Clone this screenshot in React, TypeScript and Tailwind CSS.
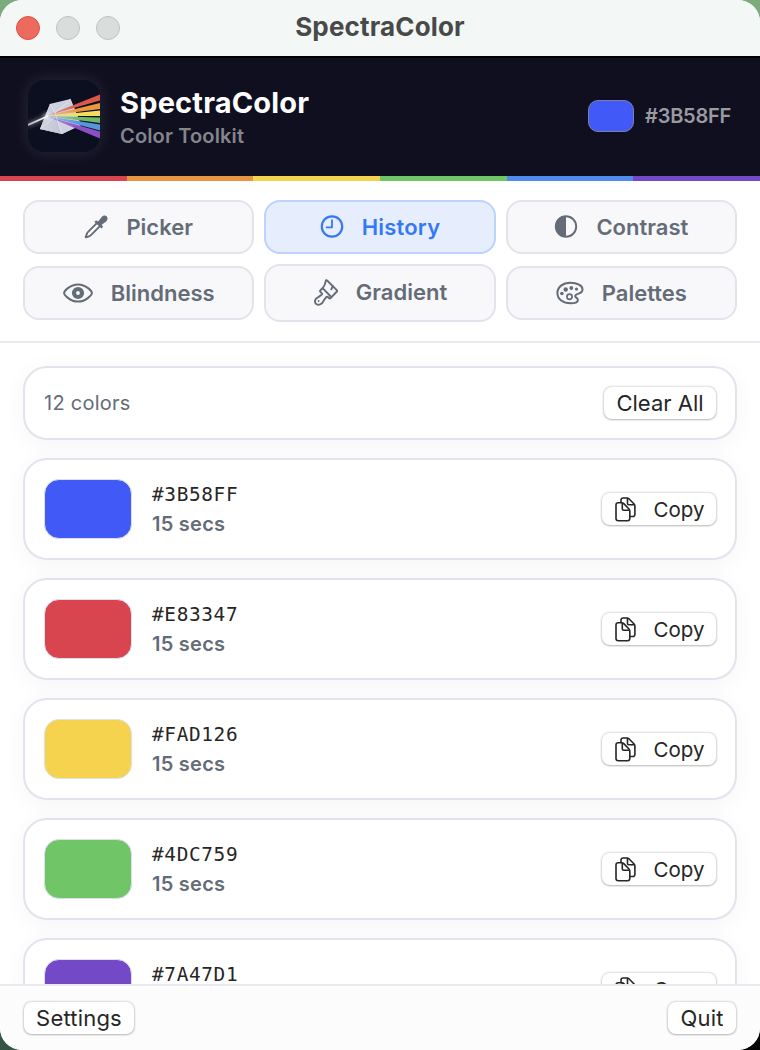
import type { ReactNode } from 'react';
import clsx from 'clsx';

const stripes = ['bg-[#d8454f]', 'bg-[#e8953f]', 'bg-[#f5d34f]', 'bg-[#70c567]', 'bg-[#508bee]', 'bg-[#7449c8]'];

const history = [
  { hex: '#3B58FF', swatch: 'bg-[#4059f7]', time: '15 secs' },
  { hex: '#E83347', swatch: 'bg-[#d8454f]', time: '15 secs' },
  { hex: '#FAD126', swatch: 'bg-[#f5d34f]', time: '15 secs' },
  { hex: '#4DC759', swatch: 'bg-[#70c567]', time: '15 secs' },
  { hex: '#7A47D1', swatch: 'bg-[#7449c8]', time: '15 secs' },
];

const PickerIcon = () => (
  <svg width="24" height="24" viewBox="0 0 24 24" fill="none">
    <path
      d="M13.6 7.4 4.1 16.9c-.9.9-1.1 1.4-1.3 2.3L1.6 22l.5.4 2.8-1.1c.9-.3 1.5-.6 2.3-1.4l9.5-9.5"
      stroke="currentColor"
      strokeWidth="1.9"
      strokeLinejoin="round"
    />
    <path
      d="M10.9 6.2c.8-.9 1.7-.9 2.5-.2l.7.5 3.2-4.1c1.5-2 3.8-2.5 5.3-1.1s1.2 3.9-.8 5.4l-4.1 3.1.6.8c.6.8.6 1.6-.1 2.3l-.7.7-7-6.7z"
      fill="currentColor"
    />
  </svg>
);

const ClockIcon = () => (
  <svg width="24" height="24" viewBox="0 0 24 24" fill="none" stroke="currentColor" strokeWidth="2.2" strokeLinecap="round">
    <circle cx="12" cy="11.5" r="10.2" />
    <path d="M12 5.2v7.1H6.6" strokeWidth="1.8" strokeLinejoin="round" />
  </svg>
);

const ContrastIcon = () => (
  <svg width="24" height="24" viewBox="0 0 24 24" fill="none">
    <circle cx="12" cy="11.5" r="10.2" stroke="currentColor" strokeWidth="1.9" />
    <path d="M12 1.3a10.2 10.2 0 0 0 0 20.4z" fill="currentColor" />
  </svg>
);

const EyeIcon = () => (
  <svg width="30" height="20" viewBox="0 0 30 20" fill="none">
    <path
      d="M1.1 10c0-1.5 5.5-8.6 13.9-8.6S28.9 8.5 28.9 10 23.4 18.6 15 18.6 1.1 11.5 1.1 10z"
      stroke="currentColor"
      strokeWidth="2"
    />
    <circle cx="15" cy="10" r="4" stroke="currentColor" strokeWidth="4.2" />
  </svg>
);

const BrushIcon = () => (
  <svg
    width="24"
    height="27"
    viewBox="0 0 24 27"
    fill="none"
    stroke="currentColor"
    strokeWidth="1.9"
    strokeLinecap="round"
    strokeLinejoin="round"
  >
    <path d="M13.1 1.5 22.8 11.2c.5.5.5.9.1 1.3L16.6 19.2c-.5.5-1 .5-1.4 0l-1.3-1.2c-.6-.5-1.1-.5-1.6.1l-1.4 1.7c-.5.6-.8 1.1-1.3 2C8.2 24.9 5 26.7 2.5 25.2-.1 23.3.8 19.5 3.9 18.3c.9-.4 1.4-.7 2-1.2l1.7-1.4c.6-.5.6-1.1.1-1.6l-1.3-1.3c-.5-.5-.5-1 0-1.5l2.2-2.1c1.8-2 2.7-4 3.1-7.1.1-.9.8-1.2 1.4-.6z" />
    <path d="m8.6 9.2 8.7 8.8M17.3 10.3l1.5-3.1" />
    <circle cx="4.6" cy="22" r=".9" fill="currentColor" stroke="none" />
  </svg>
);

const PaletteIcon = () => (
  <svg width="28" height="24" viewBox="0 0 28 24" fill="none">
    <path
      d="M14.2 1.7C21.5 1.7 26.3 4.4 26.5 8.1c.2 2.5-1.6 3.8-3.9 4.5-2.1.6-3.5 1.4-3.4 2.7.1 1.2 2.7 1.6 2.7 3.6 0 2.2-3.3 3.4-7.3 3.4C7 22.3 1.4 18.2 1.4 12.1c0-6 5.5-10.4 12.8-10.4z"
      stroke="currentColor"
      strokeWidth="2"
    />
    <circle cx="5.9" cy="12.5" r="1.8" fill="currentColor" />
    <circle cx="9.7" cy="8.5" r="2.2" fill="currentColor" />
    <circle cx="15.3" cy="7" r="1.9" fill="currentColor" />
    <circle cx="20.5" cy="8.1" r="1.6" fill="currentColor" />
    <circle cx="13.5" cy="15.8" r="2.6" stroke="currentColor" strokeWidth="1.7" />
  </svg>
);

const CopyIcon = () => (
  <svg
    className="-mt-px"
    width="21"
    height="25"
    viewBox="0 0 21 25"
    fill="none"
    stroke="currentColor"
    strokeWidth="1.6"
    strokeLinecap="round"
    strokeLinejoin="round"
  >
    <path d="M6 5V3.2C6 1.8 6.8 1 8.2 1H12c.8 0 1.3.2 1.9.8l5.2 5.2c.6.6.8 1.1.8 2v8.2c0 1.5-.8 2.3-2.3 2.3h-2.2" />
    <path d="M12.5 1.5v5c0 .9.5 1.3 1.3 1.3h5.5" />
    <path d="M1 8C1 6.5 1.8 5.8 3.2 5.8h3.6c.9 0 1.4.2 2 .8l5.2 5.4c.6.6.8 1.1.8 2v7.6c0 1.5-.8 2.2-2.3 2.2H3.3C1.8 23.8 1 23.1 1 21.6z" />
    <path d="M7.3 6.3v5.5c0 1 .5 1.5 1.5 1.5h5.4" />
  </svg>
);

const AppLogo = () => (
  <svg
    className="size-[72px] rounded-[16px] bg-[#0c0f20] shadow-[0_0_16px_1px_rgba(255,225,245,0.11)]"
    viewBox="0 0 72 72"
    fill="none"
  >
    <defs>
      <linearGradient id="beam" x1="0" y1="44" x2="20" y2="36" gradientUnits="userSpaceOnUse">
        <stop stopColor="#bbbec5" />
        <stop offset="1" stopColor="#fff" />
      </linearGradient>
      <linearGradient id="fade" x1="19" y1="36" x2="50" y2="36" gradientUnits="userSpaceOnUse">
        <stop stopColor="#d9dae6" />
        <stop offset=".35" stopColor="#d9dae6" stopOpacity=".6" />
        <stop offset="1" stopColor="#d9dae6" stopOpacity="0" />
      </linearGradient>
      <filter id="glow" x="-50%" y="-50%" width="200%" height="200%">
        <feGaussianBlur stdDeviation="2" />
      </filter>
    </defs>
    <path d="M0 45 20 36" stroke="#fff" strokeWidth="4" opacity=".35" filter="url(#glow)" />
    <path d="m22 24 20.5-5L53 45l-19 9-22-5z" fill="#c9cbda" />
    <path d="m22 24 5 9 7 21-22-5z" fill="#babdce" />
    <path d="m27 33 15.5-14L53 45l-19 9z" fill="#cdcfdc" />
    <path d="m18 36 54-21.5v6z" fill="#dd5748" />
    <path d="m18 36 54-13v6z" fill="#ea963f" />
    <path d="m18 36 54-5.5V36z" fill="#f2dd5c" />
    <path d="m18 36 54 1.5V43z" fill="#70b965" />
    <path d="m18 36 54 8.5v6z" fill="#5696dd" />
    <path d="m18 36 54 15.5v7z" fill="#8b50c6" />
    <path d="m22 24 20.5-5L53 45l-19 9-22-5z" fill="url(#fade)" opacity=".6" />
    <path d="m22 24 5 9 7 21M27 33l15.5-14M12 49l15-12" stroke="#f1f1f8" strokeWidth=".7" opacity=".7" />
    <circle cx="19" cy="36" r="3" fill="#fff" opacity=".6" filter="url(#glow)" />
    <path d="M0 45 20 36" stroke="url(#beam)" strokeWidth="1.7" />
  </svg>
);

const tabs = [
  { label: 'Picker', icon: <PickerIcon /> },
  { label: 'History', icon: <ClockIcon />, active: true },
  { label: 'Contrast', icon: <ContrastIcon /> },
  { label: 'Blindness', icon: <EyeIcon /> },
  { label: 'Gradient', icon: <BrushIcon />, tall: true },
  { label: 'Palettes', icon: <PaletteIcon /> },
];

const PushButton = ({ children, className }: { children: ReactNode; className?: string }) => (
  <button
    className={clsx(
      'flex h-8 items-center justify-center rounded-[8px] bg-white text-[#262626] shadow-[0_0_2px_0.5px_rgba(0,0,0,0.13),0_1px_2px_rgba(0,0,0,0.18)]',
      className,
    )}
  >
    {children}
  </button>
);

const TitleBar = () => (
  <div className="relative flex h-14 shrink-0 items-center justify-center bg-[#f3f7f6] pb-[2px]">
    <div className="absolute top-4 left-4 flex gap-4">
      <span className="size-6 rounded-full border border-[#d65448] bg-[#ed6a5e]" />
      <span className="size-6 rounded-full border border-[#bfc3c1] bg-[#d9dddb]" />
      <span className="size-6 rounded-full border border-[#bfc3c1] bg-[#d9dddb]" />
    </div>
    <span className="text-[26px] leading-none font-bold tracking-[0.15px] text-[#484a49]">SpectraColor</span>
  </div>
);

const Header = () => (
  <header className="shrink-0">
    <div className="flex h-[120px] items-center border-t-2 border-black bg-[#0f0f1f] pr-[29px] pb-[2px] pl-7">
      <AppLogo />
      <div className="ml-5 flex flex-col pt-[5px]">
        <span className="text-[29px] leading-9 font-bold tracking-[0.18px] text-white">SpectraColor</span>
        <span className="text-[20px] leading-[31px] font-semibold tracking-[0.15px] text-[#85858c]">Color Toolkit</span>
      </div>
      <div className="ml-auto flex items-center gap-[11px]">
        <span className="h-8 w-[46px] rounded-[10px] border-[1.5px] border-[#7e80ac] bg-[#4059f7]" />
        <span className="text-[20px] leading-none font-semibold tracking-[-0.25px] text-[#9a9aa0]">#3B58FF</span>
      </div>
    </div>
    <div className="flex h-[5px]">
      {stripes.map(color => (
        <span key={color} className={clsx('flex-1', color)} />
      ))}
    </div>
  </header>
);

const Tabs = () => (
  <nav className="grid h-[162px] shrink-0 grid-cols-3 grid-rows-[54px_58px] items-center gap-x-[10px] gap-y-[10px] border-b-2 border-[#e9eaef] bg-white px-[23px] pt-[19px]">
    {tabs.map(tab => (
      <button
        key={tab.label}
        className={clsx(
          'flex items-center justify-center gap-[18px] rounded-[16px] border-2 text-[22px] leading-none font-semibold',
          tab.tall ? 'h-[58px] pb-[2px] pl-px' : 'h-[54px]',
          tab.active
            ? 'border-[#bcd3fc] bg-[#e6eefe] tracking-[0.2px] text-[#3478f6]'
            : 'border-[#e1e4eb] bg-[#f8f8fb] text-[#646c77]',
        )}
      >
        {tab.icon}
        <span>{tab.label}</span>
      </button>
    ))}
  </nav>
);

const Card = ({ children, className }: { children: ReactNode; className?: string }) => (
  <div
    className={clsx(
      'flex shrink-0 items-center rounded-[24px] border-2 border-[#e1e5eb] bg-white px-[19px] shadow-[0_4px_24px_rgba(0,0,0,0.045)]',
      className,
    )}
  >
    {children}
  </div>
);

export default function App() {
  return (
    <div className="h-[1050px] w-[760px] bg-[linear-gradient(to_right,transparent_50%,#050505_50%),linear-gradient(to_bottom,#7dac7c,#355443)] bg-[length:100%_50%,100%_100%] bg-bottom bg-no-repeat font-['Inter',sans-serif]">
      <div className="flex h-full flex-col overflow-hidden rounded-[22px] bg-white">
        <TitleBar />
        <Header />
        <Tabs />
        <main className="flex min-h-0 flex-1 flex-col gap-[18px] overflow-hidden px-[23px] pt-[23px]">
          <Card className="h-[74px] justify-between">
            <span className="text-[20px] tracking-[0.25px] text-[#646c77]">12 colors</span>
            <PushButton className="w-[112px] text-[22px]">Clear All</PushButton>
          </Card>
          {history.map(entry => (
            <Card key={entry.hex} className="h-[102px]">
              <span className={clsx('h-[60px] w-[88px] rounded-[15px] border-[1.5px] border-[#dbe0ea]', entry.swatch)} />
              <div className="ml-5 flex flex-col">
                <span className="pt-px font-['DejaVu_Sans_Mono',monospace] text-[19.4px] leading-[29px] tracking-[0.65px] text-[#262626]">
                  {entry.hex}
                </span>
                <span className="text-[20px] leading-[30px] font-semibold tracking-[0.25px] text-[#646c77]">
                  {entry.time}
                </span>
              </div>
              <PushButton className="ml-auto w-[114px] gap-[18px] pt-[2px] pl-px text-[20.5px]">
                <CopyIcon />
                Copy
              </PushButton>
            </Card>
          ))}
        </main>
        <footer className="flex h-[66px] shrink-0 items-center justify-between border-t-2 border-[#e9eaef] bg-[#fcfcfc] px-6">
          <PushButton className="w-[110px] text-[22px] tracking-[0.2px]">Settings</PushButton>
          <PushButton className="w-[68px] text-[22px] tracking-[0.2px]">Quit</PushButton>
        </footer>
      </div>
    </div>
  );
}
